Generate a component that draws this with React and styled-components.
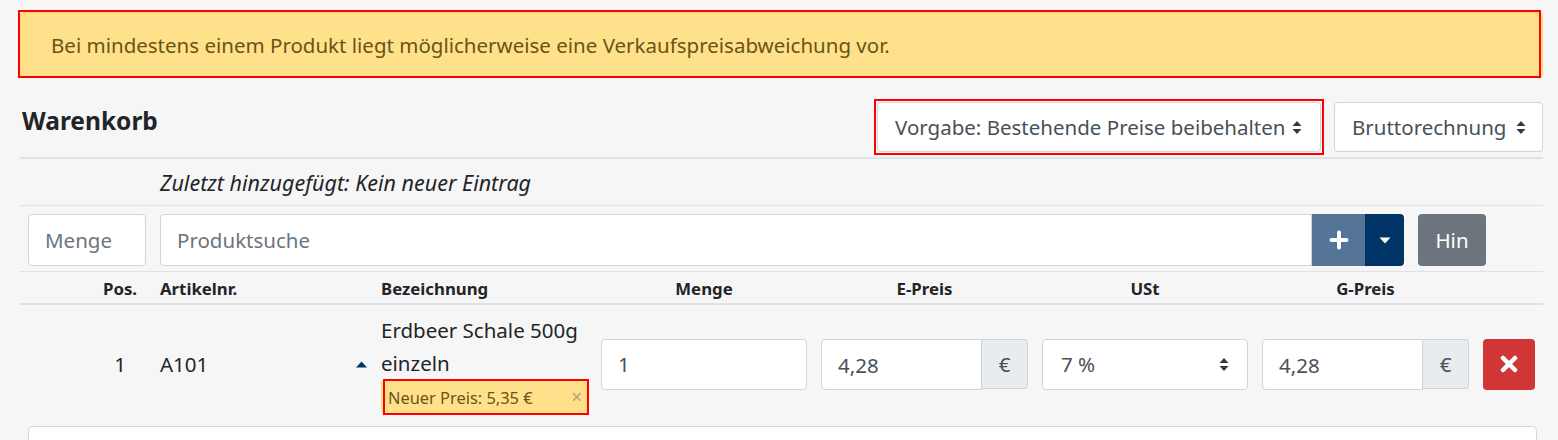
import React from "react";
import styled, { createGlobalStyle } from "styled-components";

const GlobalStyle = createGlobalStyle`
  html, body { margin: 0; padding: 0; }
  body {
    background: #f6f6f6;
    font-family: "Noto Sans", "Open Sans", sans-serif;
    color: #212529;
    width: 1558px;
    overflow: hidden;
  }
  * { box-sizing: border-box; }
`;

const Page = styled.div`
  padding: 12px 15px 0 20px;
`;

const Alert = styled.div`
  position: relative;
  height: 66px;
  display: flex;
  align-items: center;
  padding: 0 30px;
  background: #ffe18c;
  border: 1px solid #ffd978;
  border-radius: 3px;
  color: #6b5412;
  font-size: 20.5px;
  &::after {
    content: "";
    position: absolute;
    left: -3px;
    right: 1px;
    top: -3px;
    bottom: -1px;
    border: 2px solid #ff0000;
    pointer-events: none;
  }
`;

const CartHeader = styled.div`
  display: flex;
  justify-content: space-between;
  align-items: flex-start;
  margin-top: 24px;
  padding-bottom: 5px;
  border-bottom: 2px solid #dfe2e6;
`;

const Title = styled.h2`
  margin: 4px 0 0 2px;
  font-size: 24.5px;
  font-weight: 700;
  line-height: 29px;
  color: #212529;
`;

const Controls = styled.div`
  display: flex;
  gap: 13px;
`;

const SelectBox = styled.div`
  position: relative;
  width: ${(p) => p.$w}px;
  height: ${(p) => p.$h || 50}px;
  display: flex;
  align-items: center;
  justify-content: space-between;
  padding: 0 ${(p) => p.$pr || 18}px 0 ${(p) => p.$pl || 17}px;
  background: #fff;
  border: 1px solid #ced4da;
  border-radius: 4px;
  font-size: 20.5px;
  color: #495057;
  white-space: nowrap;
  &::after {
    content: "";
    display: ${(p) => (p.$marked ? "block" : "none")};
    position: absolute;
    left: -4px;
    right: -4px;
    top: -4px;
    bottom: -4px;
    border: 2px solid #ff0000;
    pointer-events: none;
  }
`;

const LastAdded = styled.div`
  height: 47px;
  display: flex;
  align-items: center;
  padding-left: 140px;
  font-style: italic;
  font-size: 21.5px;
  color: #212529;
  border-bottom: 1px solid #dfe2e6;
`;

const AddRow = styled.div`
  display: flex;
  align-items: center;
  gap: 14px;
  padding: 8px 0 5px 8px;
  border-bottom: 1px solid #dfe2e6;
`;

const TextInput = styled.input`
  width: ${(p) => (p.$w ? `${p.$w}px` : "100%")};
  flex: ${(p) => (p.$grow ? 1 : "none")};
  min-width: 0;
  height: ${(p) => p.$h || 52}px;
  padding: 0 16px;
  background: #fff;
  border: 1px solid #ced4da;
  border-radius: ${(p) => p.$radius || "4px"};
  font-family: inherit;
  font-size: 20.5px;
  color: #495057;
  outline: none;
  &::placeholder { color: #6c757d; }
`;

const SearchGroup = styled.div`
  flex: none;
  width: 1244px;
  display: flex;
  height: 52px;
`;

const IconButton = styled.button`
  flex: none;
  width: ${(p) => p.$w}px;
  height: ${(p) => p.$h || 52}px;
  display: flex;
  align-items: center;
  justify-content: center;
  padding: 0;
  border: none;
  background: ${(p) => p.$bg};
  color: #fff;
  border-radius: ${(p) => p.$radius || "0"};
`;

const HinButton = styled.button`
  width: 68px;
  height: 52px;
  border: none;
  border-radius: 4px;
  background: #6c757d;
  color: #fff;
  font-family: inherit;
  font-size: 20.5px;
`;

const Grid = styled.div`
  display: grid;
  grid-template-columns: 67px 66px 221px 220px 220px 221px 220px 221px 1fr;
  align-items: center;
`;

const HeadRow = styled(Grid)`
  height: 33px;
  padding-top: 2px;
  border-bottom: 2px solid #dfe2e6;
`;

const HeadCell = styled.div`
  padding: 0 7px;
  font-size: 16.8px;
  font-weight: 700;
  text-align: ${(p) => p.$align || "left"};
  color: #212529;
`;

const BodyRow = styled(Grid)`
  padding: 9px 0 10px;
`;

const Cell = styled.div`
  padding: 0 7px;
  font-size: 20.5px;
  text-align: ${(p) => p.$align || "left"};
  color: #212529;
  display: ${(p) => (p.$flex ? "flex" : "block")};
  justify-content: space-between;
  align-items: center;
`;

const Name = styled.div`
  line-height: 33px;
`;

const PriceBadge = styled.div`
  position: relative;
  height: 34px;
  display: flex;
  align-items: center;
  justify-content: space-between;
  padding: 0 4px 0 6px;
  background: #ffe18c;
  border: 1px solid #ffd978;
  border-radius: 3px;
  font-size: 16.4px;
  color: #6b5412;
  &::after {
    content: "";
    position: absolute;
    left: 1px;
    right: -3px;
    top: -2px;
    bottom: -2px;
    border: 2px solid #ff0000;
    pointer-events: none;
  }
`;

const CloseMark = styled.span`
  color: #b4a57c;
  font-size: 19px;
  line-height: 1;
`;

const Group = styled.div`
  display: flex;
  height: 50px;
`;

const Addon = styled.div`
  flex: none;
  width: 46px;
  display: flex;
  align-items: center;
  justify-content: center;
  background: #e9ecef;
  border: 1px solid #ced4da;
  border-left: none;
  border-radius: 0 4px 4px 0;
  font-size: 20.5px;
  color: #495057;
`;

const BottomCard = styled.div`
  height: 40px;
  margin: 2px 6px 0 8px;
  background: #fff;
  border: 1px solid #d3d7dc;
  border-bottom: none;
  border-radius: 5px 5px 0 0;
`;

const SortIcon = () => (
  <svg width="10" height="15" viewBox="0 0 10 15">
    <path d="M0.5 6 L5 1 L9.5 6 Z M0.5 9 L5 14 L9.5 9 Z" fill="#343a40" />
  </svg>
);

const PlusIcon = () => (
  <svg width="20" height="20" viewBox="0 0 20 20">
    <path d="M10 2.5 V17.5 M2.5 10 H17.5" stroke="#fff" strokeWidth="4" strokeLinecap="round" />
  </svg>
);

const CaretDown = ({ color = "#fff" }) => (
  <svg width="12" height="7" viewBox="0 0 12 7">
    <path d="M0.5 0.5 L11.5 0.5 L6 6.5 Z" fill={color} />
  </svg>
);

const CaretUp = () => (
  <svg width="11" height="7" viewBox="0 0 11 7">
    <path d="M0 6.5 L11 6.5 L5.5 0.5 Z" fill="#003366" />
  </svg>
);

const TimesIcon = () => (
  <svg width="18" height="18" viewBox="0 0 18 18">
    <path d="M3 3 L15 15 M15 3 L3 15" stroke="#fff" strokeWidth="4.5" strokeLinecap="round" />
  </svg>
);

export default function App() {
  return (
    <>
      <GlobalStyle />
      <Page>
        <Alert>Bei mindestens einem Produkt liegt möglicherweise eine Verkaufspreisabweichung vor.</Alert>

        <CartHeader>
          <Title>Warenkorb</Title>
          <Controls>
            <SelectBox $w={444} $marked>
              <span>Vorgabe: Bestehende Preise beibehalten</span>
              <SortIcon />
            </SelectBox>
            <SelectBox $w={209} $pr={16}>
              <span>Bruttorechnung</span>
              <SortIcon />
            </SelectBox>
          </Controls>
        </CartHeader>

        <LastAdded>Zuletzt hinzugefügt: Kein neuer Eintrag</LastAdded>

        <AddRow>
          <TextInput $w={118} placeholder="Menge" />
          <SearchGroup>
            <TextInput $grow $radius="4px 0 0 4px" placeholder="Produktsuche" />
            <IconButton $w={53} $bg="#547597">
              <PlusIcon />
            </IconButton>
            <IconButton $w={39} $bg="#003366" $radius="0 4px 4px 0">
              <CaretDown />
            </IconButton>
          </SearchGroup>
          <HinButton>Hin</HinButton>
        </AddRow>

        <HeadRow>
          <HeadCell />
          <HeadCell $align="center">Pos.</HeadCell>
          <HeadCell>Artikelnr.</HeadCell>
          <HeadCell>Bezeichnung</HeadCell>
          <HeadCell $align="center">Menge</HeadCell>
          <HeadCell $align="center">E-Preis</HeadCell>
          <HeadCell $align="center">USt</HeadCell>
          <HeadCell $align="center">G-Preis</HeadCell>
          <HeadCell />
        </HeadRow>

        <BodyRow>
          <Cell />
          <Cell $align="center">1</Cell>
          <Cell $flex>
            <span>A101</span>
            <CaretUp />
          </Cell>
          <Cell>
            <Name>Erdbeer Schale 500g einzeln</Name>
            <PriceBadge>
              <span>Neuer Preis: 5,35 €</span>
              <CloseMark>×</CloseMark>
            </PriceBadge>
          </Cell>
          <Cell>
            <TextInput $h={51} defaultValue="1" />
          </Cell>
          <Cell>
            <Group>
              <TextInput $h={51} $grow $radius="4px 0 0 4px" defaultValue="4,28" />
              <Addon>€</Addon>
            </Group>
          </Cell>
          <Cell>
            <SelectBox $w={206} $h={51} $pl={18} $pr={18}>
              <span>7 %</span>
              <SortIcon />
            </SelectBox>
          </Cell>
          <Cell>
            <Group>
              <TextInput $h={51} $grow $radius="4px 0 0 4px" defaultValue="4,28" />
              <Addon>€</Addon>
            </Group>
          </Cell>
          <Cell>
            <IconButton $w={52} $h={51} $bg="#d03636" $radius="4px">
              <TimesIcon />
            </IconButton>
          </Cell>
        </BodyRow>

        <BottomCard />
      </Page>
    </>
  );
}
